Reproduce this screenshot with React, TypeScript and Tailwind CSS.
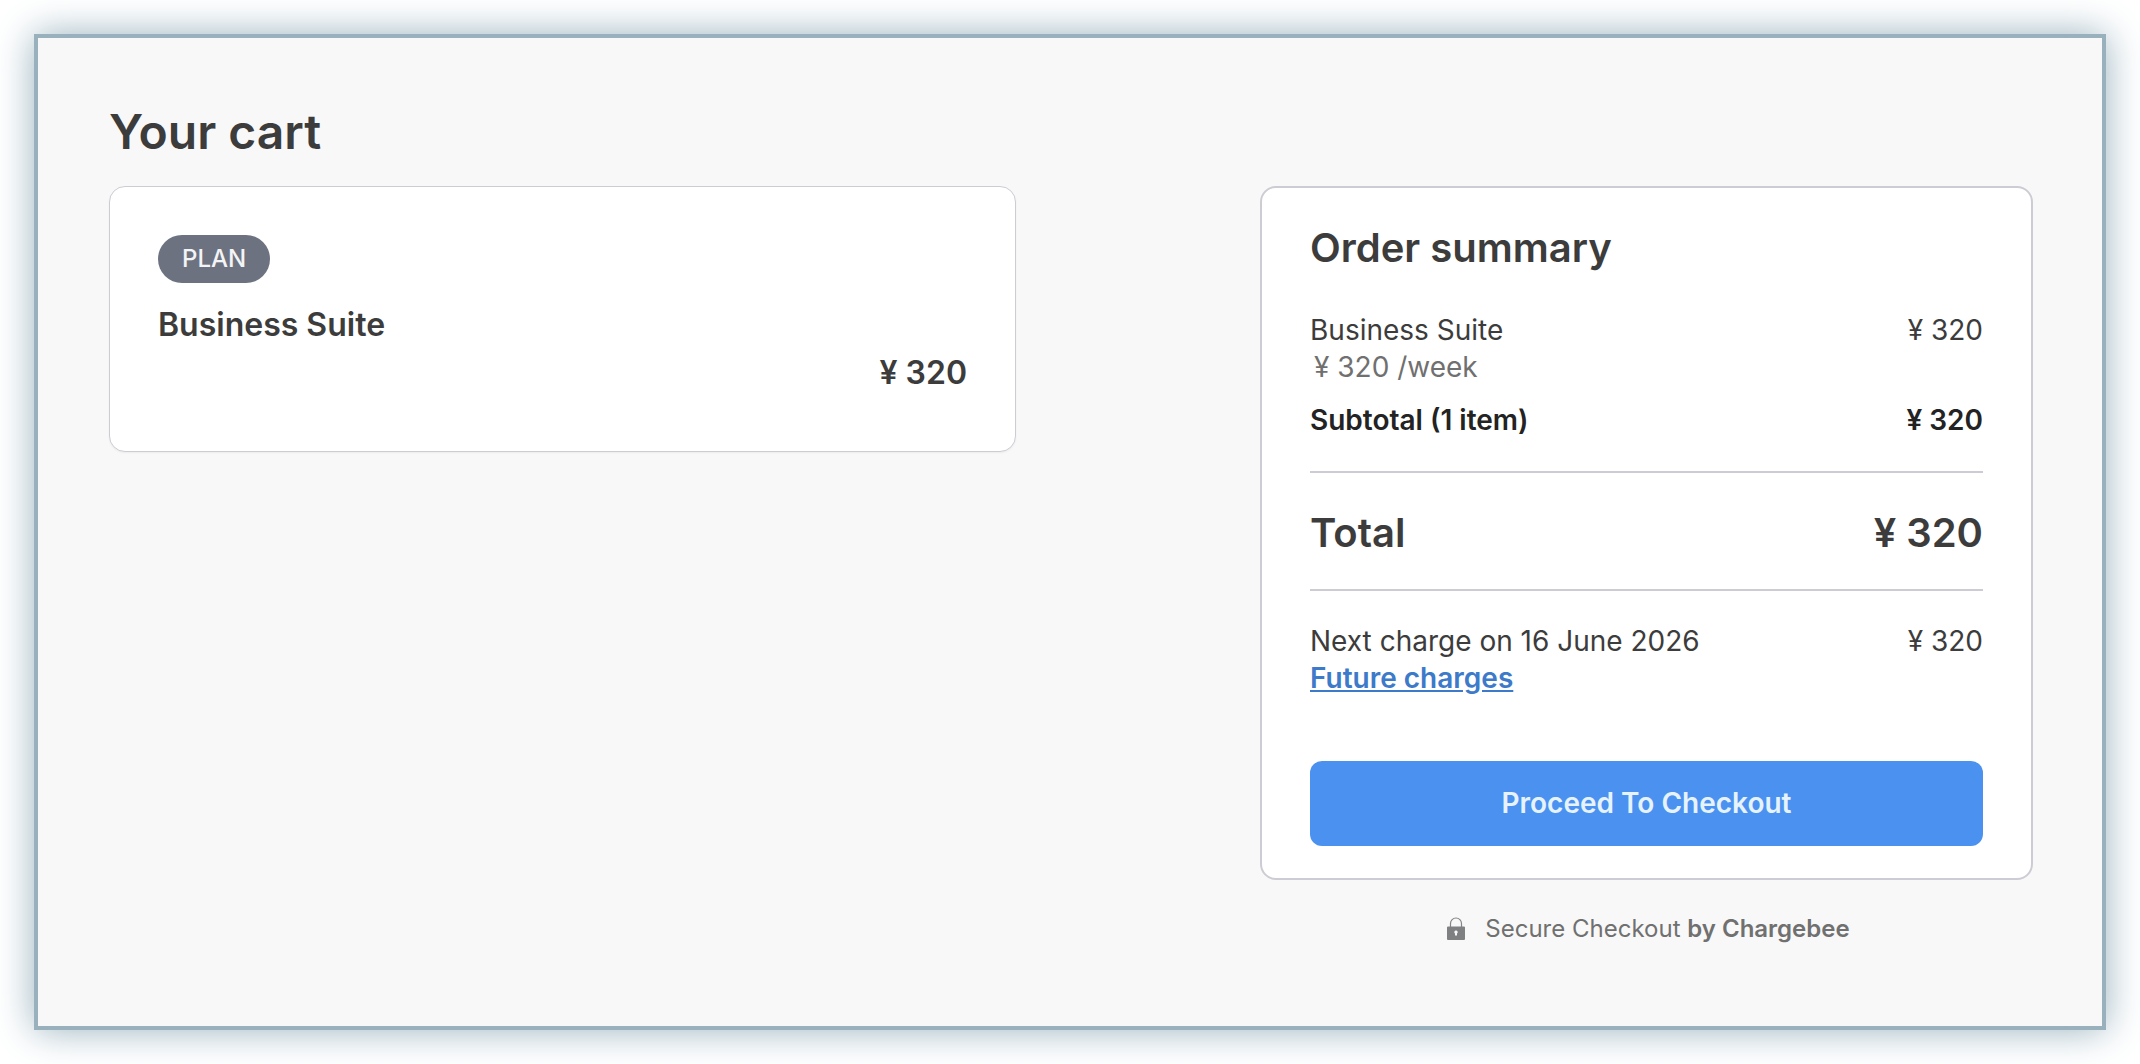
import type { ReactNode } from "react";

function Row({ label, amount, className = "" }: { label: ReactNode; amount: string; className?: string }) {
  return (
    <div className={`flex items-baseline justify-between ${className}`}>
      <dt>{label}</dt>
      <dd>{amount}</dd>
    </div>
  );
}

function LockIcon() {
  return (
    <svg className="h-6 w-[18px]" viewBox="0 0 18 24" fill="none" aria-hidden="true">
      <path d="M3.500 10V6.500a5.500 5.500 0 0 1 11 0V10" stroke="#838485" strokeWidth="1.2" />
      <path
        fillRule="evenodd"
        d="M1 9.500h16a1 1 0 0 1 1 1V22a1 1 0 0 1-1 1H1a1 1 0 0 1-1-1V10.500a1 1 0 0 1 1-1ZM9 13.500a1.700 1.700 0 0 0-1 3.100V18.500h2v-1.900a1.700 1.700 0 0 0-1-3.100Z"
        fill="#7f8081"
      />
    </svg>
  );
}

export default function App() {
  return (
    <div className="flex min-h-screen bg-white p-[34px] font-['Inter',sans-serif] text-[#3c3c3c]">
      <main className="grid flex-1 grid-cols-[907fr_773fr] content-start gap-x-[244px] border-4 border-[#98b1bd] bg-[#f8f8f8] pt-16 pr-[69px] pb-16 pl-[71px] shadow-[0_0_36px_#98b1bd]">
        <h1 className="col-span-2 mb-6 text-[48px] leading-15 font-semibold">Your cart</h1>

        <section className="flex flex-col items-start self-start rounded-2xl border border-[#cdccd4] bg-white px-12 pt-12 pb-[58px] shadow-xs">
          <span className="rounded-full bg-[#6d7280] px-6 text-[24px] leading-12 font-medium text-[#f3f4f6]">PLAN</span>
          <h2 className="mt-[22px] text-[32px] leading-10 font-semibold">Business Suite</h2>
          <p className="mt-2 self-end text-[32px] leading-10 font-semibold">¥ 320</p>
        </section>

        <aside>
          <section className="rounded-2xl border-2 border-[#cdccd4] bg-white px-12 pt-9 pb-8">
            <h2 className="text-[40px] leading-12 font-semibold">Order summary</h2>
            <dl className="mt-10 text-[28px] leading-[37px]">
              <Row label="Business Suite" amount="¥ 320" />
              <dd className="pl-1 text-[#707070]">¥ 320 /week</dd>
              <Row label="Subtotal (1 item)" amount="¥ 320" className="mt-4 font-semibold text-[#232323]" />
              <Row
                label="Total"
                amount="¥ 320"
                className="mt-8 border-y-2 border-[#cdccd4] pt-9 pb-8 text-[40px] leading-12 font-semibold"
              />
              <Row label="Next charge on 16 June 2026" amount="¥ 320" className="mt-8" />
            </dl>
            <a href="#future-charges" className="block w-fit text-[28px] leading-[37px] font-semibold text-[#3d7ac9] underline">
              Future charges
            </a>
            <button
              type="button"
              className="mt-16 block w-full rounded-xl bg-[#4a91f0] py-6 text-[28px] leading-[37px] font-semibold text-[#e6f3fd]"
            >
              Proceed To Checkout
            </button>
          </section>
          <p className="mt-8 flex items-center justify-center gap-5 pl-1 text-[24px] leading-[34px] text-[#707070]">
            <LockIcon />
            <span>
              Secure Checkout <b className="font-semibold">by Chargebee</b>
            </span>
          </p>
        </aside>
      </main>
    </div>
  );
}
